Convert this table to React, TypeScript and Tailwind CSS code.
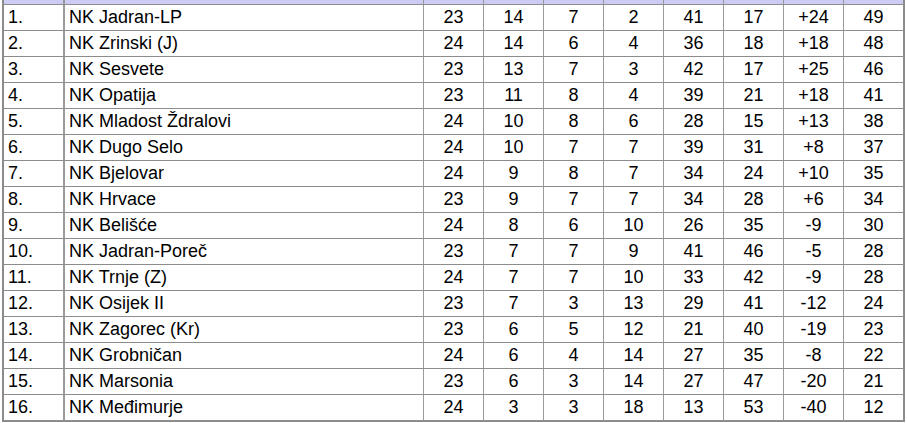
import React from "react";

const rows: [string, string, number, number, number, number, number, number, string, number][] = [
  ["1.", "NK Jadran-LP", 23, 14, 7, 2, 41, 17, "+24", 49],
  ["2.", "NK Zrinski (J)", 24, 14, 6, 4, 36, 18, "+18", 48],
  ["3.", "NK Sesvete", 23, 13, 7, 3, 42, 17, "+25", 46],
  ["4.", "NK Opatija", 23, 11, 8, 4, 39, 21, "+18", 41],
  ["5.", "NK Mladost Ždralovi", 24, 10, 8, 6, 28, 15, "+13", 38],
  ["6.", "NK Dugo Selo", 24, 10, 7, 7, 39, 31, "+8", 37],
  ["7.", "NK Bjelovar", 24, 9, 8, 7, 34, 24, "+10", 35],
  ["8.", "NK Hrvace", 23, 9, 7, 7, 34, 28, "+6", 34],
  ["9.", "NK Belišće", 24, 8, 6, 10, 26, 35, "-9", 30],
  ["10.", "NK Jadran-Poreč", 23, 7, 7, 9, 41, 46, "-5", 28],
  ["11.", "NK Trnje (Z)", 24, 7, 7, 10, 33, 42, "-9", 28],
  ["12.", "NK Osijek II", 23, 7, 3, 13, 29, 41, "-12", 24],
  ["13.", "NK Zagorec (Kr)", 23, 6, 5, 12, 21, 40, "-19", 23],
  ["14.", "NK Grobničan", 24, 6, 4, 14, 27, 35, "-8", 22],
  ["15.", "NK Marsonia", 23, 6, 3, 14, 27, 47, "-20", 21],
  ["16.", "NK Međimurje", 24, 3, 3, 18, 13, 53, "-40", 12],
];

const grid = "grid grid-cols-[61px_359px_repeat(7,60px)_59px]";

export default function App() {
  return (
    <div
      className="w-[907px] h-[423px] bg-white overflow-hidden"
      style={{ fontFamily: '"Liberation Sans", Arial, sans-serif' }}
    >
      <div className="ml-[2px] w-[903px] border-l-2 border-r-2 border-b border-[#8c8c8c]">
        <div className={`${grid} h-[5px] bg-[#ccccf5] border-b border-[#8c8c8c]`}>
          <div className="border-r-2 border-[#9a9a9a]" />
          {Array.from({ length: 8 }).map((_, i) => (
            <div key={i} className="border-r border-[#9a9a9a]" />
          ))}
          <div />
        </div>
        {rows.map((r, idx) => (
          <div
            key={idx}
            className={`${grid} h-[26px] border-b border-[#8c8c8c] text-[18px] leading-[25px] text-black`}
          >
            <div className="border-r-2 border-[#9a9a9a] pl-[4px]">{r[0]}</div>
            <div className="border-r border-[#9a9a9a] pl-[4px] whitespace-nowrap">{r[1]}</div>
            {r.slice(2).map((v, j) => (
              <div
                key={j}
                className={`text-center ${j < 7 ? "border-r border-[#9a9a9a]" : ""}`}
              >
                {v}
              </div>
            ))}
          </div>
        ))}
      </div>
    </div>
  );
}
